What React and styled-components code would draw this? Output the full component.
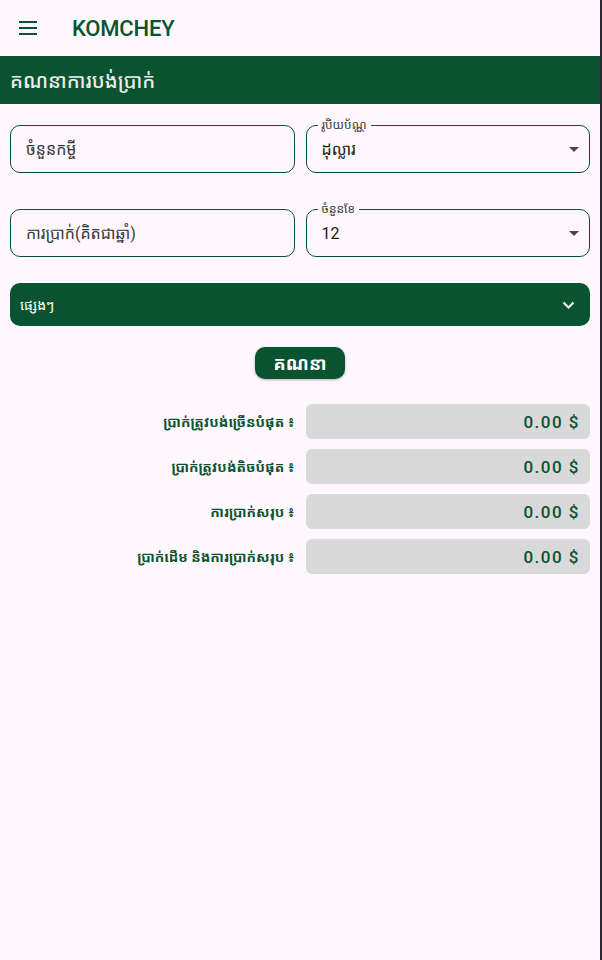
import React from "react";
import styled, { createGlobalStyle } from "styled-components";

const GREEN = "#0a5330";

const GlobalStyle = createGlobalStyle`
  html, body {
    margin: 0;
    padding: 0;
    background: #2b2930;
  }
  body {
    font-family: Roboto, "Noto Sans Khmer", "Khmer OS", "Noto Sans", sans-serif;
  }
`;

const Page = styled.div`
  width: 600px;
  min-height: 960px;
  background: #fef7fe;
  display: flex;
  flex-direction: column;
`;

const TopBar = styled.header`
  height: 56px;
  display: flex;
  align-items: center;
  padding: 0 0 0 16px;
  gap: 32px;
`;

const MenuBtn = styled.button`
  width: 24px;
  height: 24px;
  padding: 0;
  border: none;
  background: none;
  display: flex;
  align-items: center;
  justify-content: center;
`;

const Brand = styled.h1`
  margin: 0;
  font-family: Roboto, sans-serif;
  font-weight: 500;
  font-size: 22px;
  color: ${GREEN};
  letter-spacing: -0.2px;
`;

const SectionBar = styled.div`
  height: 48px;
  background: ${GREEN};
  display: flex;
  align-items: center;
  padding: 0 10px;
  color: #ececec;
  font-size: 20px;
  font-weight: 500;
`;

const Body = styled.main`
  padding: 21px 10px 0;
  display: flex;
  flex-direction: column;
`;

const FieldGrid = styled.div`
  display: grid;
  grid-template-columns: 1fr 1fr;
  column-gap: 11px;
  row-gap: 36px;
`;

const Field = styled.div`
  position: relative;
  height: 48px;
  border: 1px solid ${GREEN};
  border-radius: 10px;
  box-sizing: border-box;
  display: flex;
  align-items: center;
  padding: 0 10px 0 15px;
  color: #3a3a3a;
  font-size: 16px;
`;

const FloatLabel = styled.span`
  position: absolute;
  top: -9px;
  left: 11px;
  padding: 0 4px;
  background: #fef7fe;
  font-size: 12px;
  color: #3a3a3a;
  line-height: 16px;
`;

const Value = styled.span`
  flex: 1;
  color: #1d1b20;
`;

const Accordion = styled.div`
  margin-top: 26px;
  height: 43px;
  background: ${GREEN};
  border-radius: 10px;
  display: flex;
  align-items: center;
  justify-content: space-between;
  padding: 0 15px 0 10px;
  color: #fff;
  font-size: 14px;
`;

const CalcButton = styled.button`
  align-self: center;
  margin-top: 21px;
  width: 90px;
  height: 32px;
  border: none;
  border-radius: 10px;
  background: ${GREEN};
  color: #fff;
  font-family: inherit;
  font-size: 18px;
  font-weight: 700;
  box-shadow: 0 1px 3px rgba(0, 0, 0, 0.3);
`;

const Results = styled.div`
  margin-top: 25px;
  display: grid;
  grid-template-columns: 1fr 1fr;
  column-gap: 11px;
  row-gap: 10px;
  align-items: center;
`;

const ResultLabel = styled.span`
  text-align: right;
  color: ${GREEN};
  font-weight: 700;
  font-size: 14px;
`;

const ResultBox = styled.div`
  height: 35px;
  background: #d9d9d9;
  border-radius: 6px;
  display: flex;
  align-items: center;
  justify-content: flex-end;
  padding: 0 10px;
  color: ${GREEN};
  font-family: Roboto, sans-serif;
  font-weight: 500;
  font-size: 17px;
  letter-spacing: 1.5px;
`;

const Caret = () => (
  <svg width="10" height="5" viewBox="0 0 10 5">
    <path d="M0 0h10L5 5z" fill="#49454f" />
  </svg>
);

const results = [
  "ប្រាក់ត្រូវបង់ច្រើនបំផុត ៖",
  "ប្រាក់ត្រូវបង់តិចបំផុត ៖",
  "ការប្រាក់សរុប ៖",
  "ប្រាក់ដើម និងការប្រាក់សរុប ៖",
];

export default function App() {
  return (
    <>
      <GlobalStyle />
      <Page>
        <TopBar>
          <MenuBtn>
            <svg width="20" height="14" viewBox="0 0 20 14">
              <path d="M1 1h18M1 7h18M1 13h18" stroke={GREEN} strokeWidth="2" />
            </svg>
          </MenuBtn>
          <Brand>KOMCHEY</Brand>
        </TopBar>
        <SectionBar>គណនាការបង់ប្រាក់</SectionBar>
        <Body>
          <FieldGrid>
            <Field>ចំនួនកម្ចី</Field>
            <Field>
              <FloatLabel>រូបិយប័ណ្ណ</FloatLabel>
              <Value>ដុល្លារ</Value>
              <Caret />
            </Field>
            <Field>ការប្រាក់(គិតជាឆ្នាំ)</Field>
            <Field>
              <FloatLabel>ចំនួនខែ</FloatLabel>
              <Value>12</Value>
              <Caret />
            </Field>
          </FieldGrid>
          <Accordion>
            <span>ផ្សេងៗ</span>
            <svg width="13" height="8" viewBox="0 0 13 8">
              <path d="M1.5 1.5L6.5 6.5l5-5" stroke="#fff" strokeWidth="2" fill="none" />
            </svg>
          </Accordion>
          <CalcButton>គណនា</CalcButton>
          <Results>
            {results.map((r) => (
              <React.Fragment key={r}>
                <ResultLabel>{r}</ResultLabel>
                <ResultBox>0.00 $</ResultBox>
              </React.Fragment>
            ))}
          </Results>
        </Body>
      </Page>
    </>
  );
}
